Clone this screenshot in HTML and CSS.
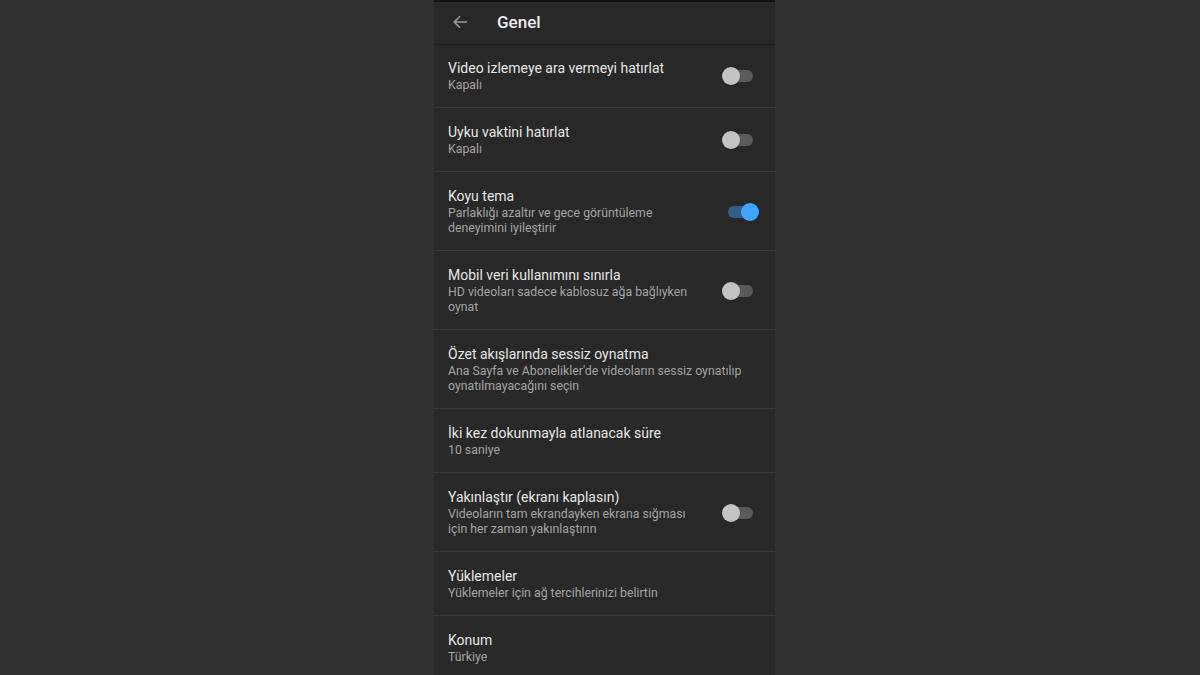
FILE: index.html
```html
<!DOCTYPE html>
<html lang="tr">
<head>
<meta charset="utf-8">
<title>Genel</title>
<link rel="stylesheet" href="styles.css">
</head>
<body>
<div class="screen">
  <header class="appbar">
    <svg class="back" width="16" height="16" viewBox="0 0 16 16"><path d="M15 8H2.5M8 2.2L2.2 8 8 13.8" fill="none" stroke="#9a9a9a" stroke-width="1.6"/></svg>
    <h1 class="title">Genel</h1>
  </header>
  <ul class="list">
    <li class="row">
      <div class="text"><div class="label">Video izlemeye ara vermeyi hatırlat</div><div class="sub">Kapalı</div></div>
      <span class="switch"><span class="thumb"></span></span>
    </li>
    <li class="row">
      <div class="text"><div class="label">Uyku vaktini hatırlat</div><div class="sub">Kapalı</div></div>
      <span class="switch"><span class="thumb"></span></span>
    </li>
    <li class="row">
      <div class="text"><div class="label">Koyu tema</div><div class="sub">Parlaklığı azaltır ve gece görüntüleme<br>deneyimini iyileştirir</div></div>
      <span class="switch on"><span class="thumb"></span></span>
    </li>
    <li class="row">
      <div class="text"><div class="label">Mobil veri kullanımını sınırla</div><div class="sub">HD videoları sadece kablosuz ağa bağlıyken<br>oynat</div></div>
      <span class="switch"><span class="thumb"></span></span>
    </li>
    <li class="row">
      <div class="text"><div class="label">Özet akışlarında sessiz oynatma</div><div class="sub">Ana Sayfa ve Abonelikler'de videoların sessiz oynatılıp<br>oynatılmayacağını seçin</div></div>
    </li>
    <li class="row">
      <div class="text"><div class="label">İki kez dokunmayla atlanacak süre</div><div class="sub">10 saniye</div></div>
    </li>
    <li class="row">
      <div class="text"><div class="label">Yakınlaştır (ekranı kaplasın)</div><div class="sub">Videoların tam ekrandayken ekrana sığması<br>için her zaman yakınlaştırın</div></div>
      <span class="switch"><span class="thumb"></span></span>
    </li>
    <li class="row">
      <div class="text"><div class="label">Yüklemeler</div><div class="sub">Yüklemeler için ağ tercihlerinizi belirtin</div></div>
    </li>
    <li class="row">
      <div class="text"><div class="label">Konum</div><div class="sub">Türkiye</div></div>
    </li>
  </ul>
</div>
</body>
</html>
```
FILE: styles.css
```css
html, body {
  margin: 0;
  height: 100%;
}
body {
  background: #313131;
  font-family: Roboto, "Noto Sans", sans-serif;
  overflow: hidden;
}
.screen {
  width: 341px;
  height: 675px;
  margin-left: 434px;
  background: #282828;
  overflow: hidden;
}
.appbar {
  height: 41px;
  border-top: 2px solid #111;
  border-bottom: 1px solid #242424;
  box-shadow: 0 1px 1px rgba(0,0,0,0.25);
  display: flex;
  align-items: center;
  padding-left: 18px;
  box-sizing: content-box;
}
.back {
  display: block;
  margin-top: -1px;
}
.title {
  margin: -1px 0 0 29px;
  font-size: 17px;
  font-weight: 500;
  color: #ededed;
}
.list {
  list-style: none;
  margin: 0;
  padding: 0;
}
.row {
  display: flex;
  align-items: center;
  padding: 15px 16px 14px 14px;
  border-bottom: 1px solid #3a3a3a;
}
.row:last-child { border-bottom: none; }
.text {
  flex: 1;
}
.label {
  font-size: 14px;
  line-height: 19px;
  color: #e6e6e6;
}
.sub {
  font-size: 12.3px;
  line-height: 15px;
  color: #a4a4a4;
}
.switch {
  position: relative;
  width: 29px;
  height: 12px;
  border-radius: 6px;
  background: #5a5a5a;
  margin-right: 6px;
}
.switch .thumb {
  position: absolute;
  left: -2px;
  top: -3px;
  width: 18px;
  height: 18px;
  border-radius: 50%;
  background: #c4c4c4;
}
.switch.on {
  background: #2f5f8c;
  margin-right: 2px;
}
.switch.on .thumb {
  left: auto;
  right: -2px;
  background: #3ea6ff;
}
```
